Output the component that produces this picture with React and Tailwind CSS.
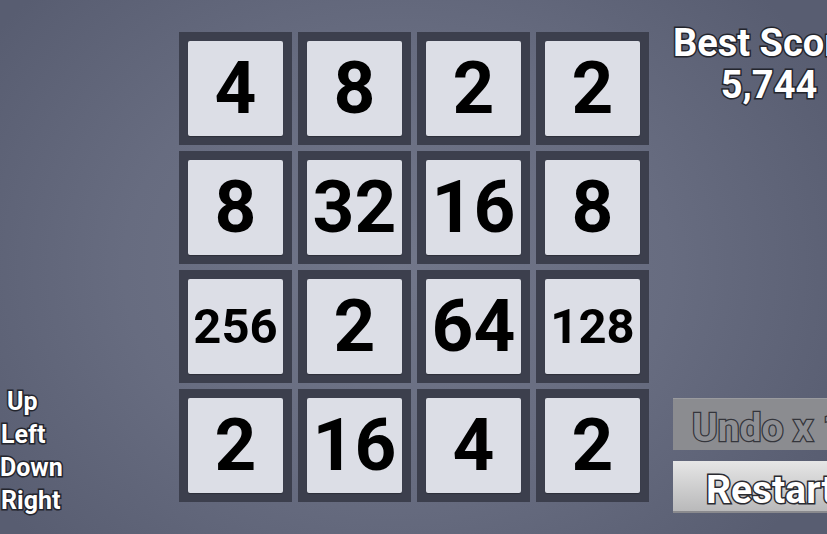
import React from 'react';

const board = [
  [4, 8, 2, 2],
  [8, 32, 16, 8],
  [256, 2, 64, 128],
  [2, 16, 4, 2],
];

const outline = '[-webkit-text-stroke:3px_#23252d] [paint-order:stroke_fill]';

function Tile({ value }) {
  // three-digit values shrink so they still fit inside the face
  const size = String(value).length > 2 ? 'text-[49px]' : 'text-[73px]';
  return (
    <div className="w-[113px] h-[113px] bg-[#3c3f4d] p-[9px]">
      <div className="w-full h-full rounded-[2px] bg-[#dcdee6] shadow-[0_1px_1px_rgba(0,0,0,0.25)] flex items-center justify-center">
        <span className={`${size} font-bold leading-none text-black`}>{value}</span>
      </div>
    </div>
  );
}

function Controls() {
  return (
    <div className={`flex flex-col text-[25px] font-bold leading-[33px] text-white ${outline} [-webkit-text-stroke-width:2.5px]`}>
      <span className="pl-[7px]">Up</span>
      <span className="pl-[1px]">Left</span>
      <span className="pl-0">Down</span>
      <span className="pl-[1px]">Right</span>
    </div>
  );
}

export default function App() {
  return (
    <div
      className="w-[827px] h-[534px] overflow-hidden flex bg-[radial-gradient(ellipse_60%_75%_at_48%_50%,#72778a_0%,#676c80_55%,#585d71_100%)]"
      style={{ fontFamily: 'Roboto, "Liberation Sans", sans-serif' }}
    >
      {/* keyboard hints */}
      <div className="w-[179px] shrink-0 flex flex-col justify-end pb-[17px]">
        <Controls />
      </div>

      {/* board */}
      <div className="shrink-0 pt-[32px]">
        <div className="grid grid-cols-4 gap-[6px]">
          {board.flat().map((v, i) => (
            <Tile key={i} value={v} />
          ))}
        </div>
      </div>

      {/* score and actions */}
      <div className="flex-1 min-w-0 flex flex-col pl-[24px]">
        <div className={`w-[200px] shrink-0 pt-[22px] flex flex-col items-center text-[38px] font-bold leading-[42px] text-white whitespace-nowrap ${outline}`}>
          <span className="self-start">Best Score</span>
          <span className="pr-[8px]">5,744</span>
        </div>

        <div className="mt-auto mb-[21px] flex flex-col gap-[11px]">
          <button className="w-[170px] h-[52px] shrink-0 bg-[#8b8c90] border-t border-[#9a9b9f] text-left pl-[19px] text-[39px] font-bold text-[#8e8f93] whitespace-nowrap [-webkit-text-stroke:2.5px_#34353b] [paint-order:stroke_fill]">
            Undo x 1
          </button>
          <button className="w-[170px] h-[52px] shrink-0 bg-gradient-to-b from-[#e6e6e6] to-[#b9b9ba] border-b-2 border-[#8a8a8e] text-left pl-[33px] text-[39px] font-bold text-white whitespace-nowrap [-webkit-text-stroke:3px_#2a2b31] [paint-order:stroke_fill]">
            Restart
          </button>
        </div>
      </div>
    </div>
  );
}
